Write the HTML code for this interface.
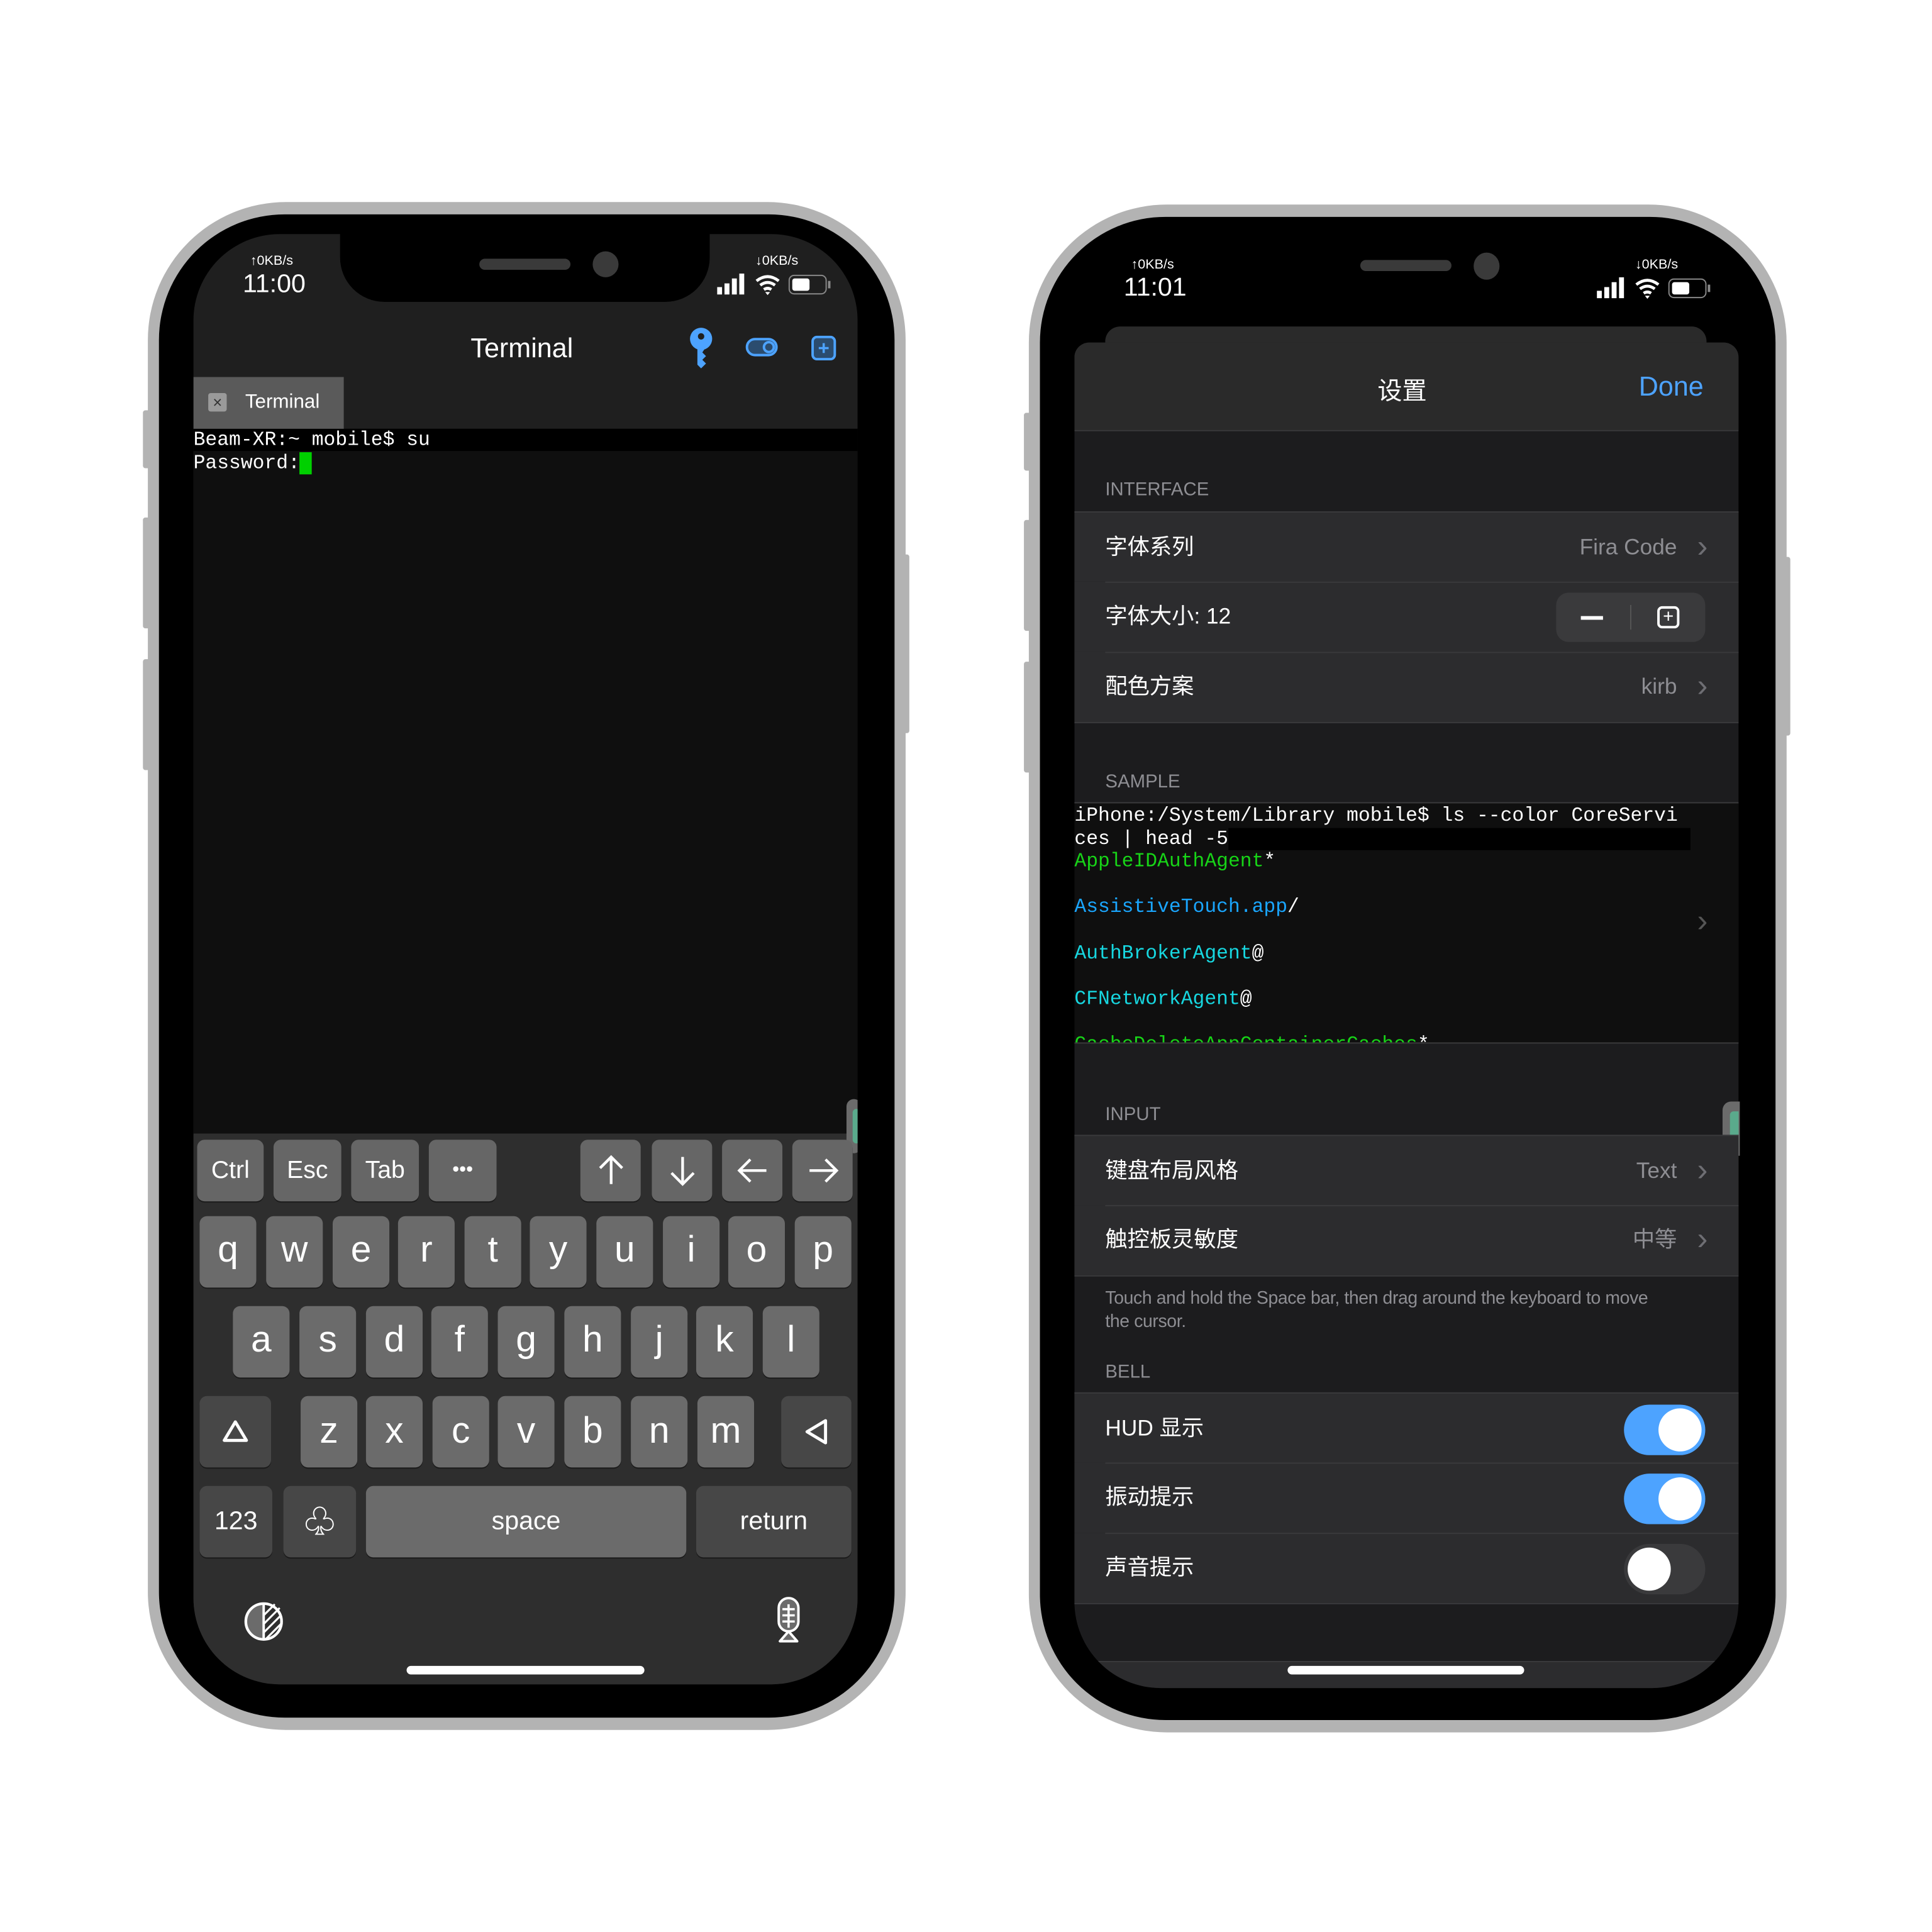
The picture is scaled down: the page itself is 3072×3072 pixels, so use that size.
<!DOCTYPE html>
<html><head><meta charset="utf-8"><style>
*{margin:0;padding:0;box-sizing:border-box}
html,body{width:3072px;height:3072px;background:#fff;overflow:hidden}
#w{position:absolute;left:0;top:0;width:1568px;height:1568px;transform:scale(1.959184);transform-origin:0 0;font-family:"Liberation Sans","Noto Sans CJK SC",sans-serif}
.a{position:absolute}
.bez{background:#b3b3b3;border-radius:112px}
.blk{background:#000;border-radius:102px}
.k{position:absolute;background:#6b6b6b;border-radius:6px;color:#fff;font-size:30px;text-align:center;box-shadow:0 1px 0 #1a1a1a}
.kd{background:#474747}
.k1{height:50px;top:925px;font-size:20px;line-height:50px;background:#666}
.ar svg{margin-top:11px}
.r2{top:987px;height:58px;line-height:56px;width:46px}
.r3{top:1060px;height:58px;line-height:56px;width:46px}
.r4{top:1133px;height:58px;line-height:58px;width:46px}
.r5{top:1206px;height:58px;line-height:58px;font-size:21px}
.mono{font-family:"Liberation Mono",monospace}
.lbl{position:absolute;left:897px;font-size:15px;color:#8e8e93}
.row{position:absolute;left:872px;width:539px;height:57px;background:#2c2c2e}
.row .t{position:absolute;left:25px;top:0;line-height:57px;font-size:18px;color:#fff}
.row .v{position:absolute;right:50px;top:0;line-height:57px;font-size:18px;color:#8e8e93}
.row .c{position:absolute;right:25px;top:0;line-height:54px;font-size:26px;color:#6e6e73}
.sep{position:absolute;left:25px;right:0;top:0;height:1px;background:#3a3a3c}
.tg{position:absolute;right:27px;top:9px;width:66px;height:41px;border-radius:21px;background:#4da3ff}
.tg i{position:absolute;right:3px;top:3px;width:35px;height:35px;border-radius:50%;background:#fff}
.tg.off{background:#3a3a3c}.tg.off i{left:3px;right:auto}
</style></head><body><div id="w">

<!-- LEFT PHONE -->
<div class="a" style="left:116px;top:333px;width:8px;height:47px;background:#b3b3b3;border-radius:2px"></div>
<div class="a" style="left:116px;top:420px;width:8px;height:90px;background:#b3b3b3;border-radius:2px"></div>
<div class="a" style="left:116px;top:535px;width:8px;height:90px;background:#b3b3b3;border-radius:2px"></div>
<div class="a" style="left:730px;top:450px;width:8px;height:145px;background:#b3b3b3;border-radius:2px"></div>
<div class="a bez" style="left:120px;top:164px;width:615px;height:1240px"></div>
<div class="a blk" style="left:129px;top:174px;width:597px;height:1220px"></div>
<div class="a" style="left:157px;top:190px;width:539px;height:1177px;border-radius:70px;overflow:hidden;background:#1f1f1f">
  <div class="a" style="left:0;top:158px;width:539px;height:572px;background:#0f0f0f"></div>
  <div class="a" style="left:0;top:158px;width:539px;height:18px;background:#000"></div>
  <div class="a" style="left:0;top:116px;width:122px;height:42px;background:#5a5a5a"></div>
  <div class="a" style="left:12px;top:129px;width:15px;height:15px;background:#9a9a9a;border-radius:2px;color:#333;font-size:13px;line-height:15px;text-align:center">×</div>
  <div class="a" style="left:42px;top:128px;color:#fff;font-size:16px">Terminal</div>
  <div class="a mono" style="left:0;top:158px;color:#fff;font-size:16px;line-height:19px;white-space:pre">Beam-XR:~ mobile$ su
Password:<span style="background:#00d000">&nbsp;</span></div>
  <div class="a" style="left:0;top:730px;width:539px;height:460px;background:#2e2e2e"></div>
  <div class="a" style="left:530px;top:702px;width:12px;height:44px;background:#6b6b6b;border-radius:6px"></div>
  <div class="a" style="left:535px;top:710px;width:6px;height:28px;background:#5aaa8c;border-radius:3px"></div>
</div>
<div class="a" style="left:276px;top:180px;width:300px;height:65px;background:#000;border-radius:0 0 36px 36px"></div>
<div class="a" style="left:389px;top:210px;width:74px;height:9px;background:#3a3a3a;border-radius:5px"></div>
<div class="a" style="left:481px;top:204px;width:21px;height:21px;background:#3a3a3a;border-radius:50%"></div>
<div class="a" style="left:203px;top:206px;color:#fff;font-size:11px">↑0KB/s</div>
<div class="a" style="left:197px;top:219px;color:#fff;font-size:21px">11:00</div>
<div class="a" style="left:613px;top:206px;color:#fff;font-size:11px">↓0KB/s</div>
<svg class="a" style="left:582px;top:222px" width="95" height="18" viewBox="0 0 95 18">
<rect x="0" y="11" width="4" height="6" fill="#fff"/><rect x="6" y="8" width="4" height="9" fill="#fff"/><rect x="12" y="4" width="4" height="13" fill="#fff"/><rect x="18" y="0" width="4" height="17" fill="#fff"/>
<path d="M32 6 Q41 -1 50 6 M35 9.5 Q41 5 47 9.5 M38 13 Q41 11 44 13" stroke="#fff" stroke-width="2.4" fill="none"/><path d="M39 15 L41 17.5 L43 15Z" fill="#fff"/>
<rect x="58.5" y="1.5" width="30" height="15" rx="4" fill="none" stroke="#888"/><rect x="61" y="4" width="14" height="10" rx="2" fill="#fff"/><rect x="90" y="6" width="2" height="6" fill="#888"/>
</svg>
<div class="a" style="left:382px;top:270px;color:#fff;font-size:22px">Terminal</div>
<svg class="a" style="left:558px;top:265px" width="22" height="34" viewBox="0 0 22 34"><circle cx="11" cy="10" r="9" fill="#4da3ff"/><circle cx="11" cy="8" r="2.6" fill="#1f1f1f"/><path d="M8 16 L8 31 L11 34 L15 30 L12 27 L15 24 L12 21 L14 18 L14 16Z" fill="#4da3ff"/></svg>
<svg class="a" style="left:605px;top:273px" width="28" height="18" viewBox="0 0 28 18"><rect x="1.2" y="2.2" width="24" height="13" rx="6.5" fill="#2b4c6e" stroke="#4da3ff" stroke-width="2"/><circle cx="19" cy="8.7" r="4" fill="none" stroke="#4da3ff" stroke-width="2"/></svg>
<svg class="a" style="left:658px;top:272px" width="22" height="22" viewBox="0 0 22 22"><rect x="1.5" y="1.5" width="18" height="18" rx="3.5" fill="#2b4c6e" stroke="#4da3ff" stroke-width="2"/><path d="M10.5 6.5v8M6.5 10.5h8" stroke="#4da3ff" stroke-width="1.8"/></svg>
<!-- keys -->
<div class="k k1" style="left:160px;width:54px">Ctrl</div>
<div class="k k1" style="left:222px;width:55px">Esc</div>
<div class="k k1" style="left:285px;width:55px">Tab</div>
<div class="k k1" style="left:348px;width:55px;font-size:16px">•••</div>
<div class="k k1 ar" style="left:471px;width:49px"><svg width="28" height="28" viewBox="0 0 28 28"><path d="M14 25V4M5 12l9-9 9 9" stroke="#fff" stroke-width="2.2" fill="none"/></svg></div>
<div class="k k1 ar" style="left:529px;width:49px"><svg width="28" height="28" viewBox="0 0 28 28"><path d="M14 3v21M5 16l9 9 9-9" stroke="#fff" stroke-width="2.2" fill="none"/></svg></div>
<div class="k k1 ar" style="left:586px;width:49px"><svg width="28" height="28" viewBox="0 0 28 28"><path d="M25 14H4M12 5l-9 9 9 9" stroke="#fff" stroke-width="2.2" fill="none"/></svg></div>
<div class="k k1 ar" style="left:643px;width:49px"><svg width="28" height="28" viewBox="0 0 28 28"><path d="M3 14h21M16 5l9 9-9 9" stroke="#fff" stroke-width="2.2" fill="none"/></svg></div>
<div class="k r2" style="left:162px">q</div><div class="k r2" style="left:216px">w</div><div class="k r2" style="left:270px">e</div><div class="k r2" style="left:323px">r</div><div class="k r2" style="left:377px">t</div><div class="k r2" style="left:430px">y</div><div class="k r2" style="left:484px">u</div><div class="k r2" style="left:538px">i</div><div class="k r2" style="left:591px">o</div><div class="k r2" style="left:645px">p</div>
<div class="k r3" style="left:189px">a</div><div class="k r3" style="left:243px">s</div><div class="k r3" style="left:297px">d</div><div class="k r3" style="left:350px">f</div><div class="k r3" style="left:404px">g</div><div class="k r3" style="left:458px">h</div><div class="k r3" style="left:512px">j</div><div class="k r3" style="left:565px">k</div><div class="k r3" style="left:619px">l</div>
<div class="k r4 kd" style="left:162px;width:58px"><svg width="24" height="22" viewBox="0 0 24 22" style="margin-top:18px"><path d="M12 3 L21 18 H3 Z" fill="none" stroke="#fff" stroke-width="2.5" stroke-linejoin="round"/></svg></div>
<div class="k r4" style="left:244px">z</div><div class="k r4" style="left:297px">x</div><div class="k r4" style="left:351px">c</div><div class="k r4" style="left:404px">v</div><div class="k r4" style="left:458px">b</div><div class="k r4" style="left:512px">n</div><div class="k r4" style="left:566px">m</div>
<div class="k r4 kd" style="left:634px;width:57px"><svg width="22" height="24" viewBox="0 0 22 24" style="margin-top:17px"><path d="M3 12 L18 3 V21 Z" fill="none" stroke="#fff" stroke-width="2.5" stroke-linejoin="round"/></svg></div>
<div class="k r5 kd" style="left:162px;width:59px">123</div>
<div class="k r5 kd" style="left:230px;width:59px;font-size:26px">♧</div>
<div class="k r5" style="left:297px;width:260px">space</div>
<div class="k r5 kd" style="left:565px;width:126px">return</div>
<svg class="a" style="left:197px;top:1299px" width="34" height="34" viewBox="0 0 34 34"><defs><clipPath id="rh"><rect x="17" y="0" width="17" height="34"/></clipPath></defs><circle cx="17" cy="17" r="14.5" fill="#6b6b6b" stroke="#fff" stroke-width="2.2"/><g clip-path="url(#rh)"><circle cx="17" cy="17" r="13.4" fill="#2e2e2e"/><path d="M17 12 L26 3 M17 19 L30 6 M17 26 L31 12 M19 31 L32 18" stroke="#fff" stroke-width="1.6"/></g><path d="M17 3 V31" stroke="#fff" stroke-width="2"/></svg>
<svg class="a" style="left:629px;top:1296px" width="22" height="40" viewBox="0 0 22 40"><rect x="3" y="1" width="16" height="27" rx="8" fill="#6b6b6b" stroke="#fff" stroke-width="2"/><path d="M6 10h10M6 15h10M6 20h10M11 6v19" stroke="#fff" stroke-width="1.8"/><path d="M11 28 L4 36 H18 Z" fill="#6b6b6b" stroke="#fff" stroke-width="2" stroke-linejoin="round"/></svg>
<div class="a" style="left:330px;top:1352px;width:193px;height:7px;background:#fff;border-radius:4px"></div>

<!-- RIGHT PHONE -->
<div class="a" style="left:831px;top:335px;width:8px;height:47px;background:#b3b3b3;border-radius:2px"></div>
<div class="a" style="left:831px;top:422px;width:8px;height:90px;background:#b3b3b3;border-radius:2px"></div>
<div class="a" style="left:831px;top:537px;width:8px;height:90px;background:#b3b3b3;border-radius:2px"></div>
<div class="a" style="left:1445px;top:452px;width:8px;height:145px;background:#b3b3b3;border-radius:2px"></div>
<div class="a bez" style="left:835px;top:166px;width:615px;height:1240px"></div>
<div class="a blk" style="left:844px;top:176px;width:597px;height:1220px"></div>
<div class="a" style="left:872px;top:192px;width:539px;height:1178px;border-radius:70px;overflow:hidden;background:#000">
  <div class="a" style="left:25px;top:73px;width:488px;height:40px;background:#2a2a2a;border-radius:12px"></div>
  <div class="a" style="left:0;top:86px;width:539px;height:1100px;background:#1c1c1e;border-radius:12px 12px 0 0"></div>
  <div class="a" style="left:0;top:86px;width:539px;height:72px;background:#2a2a2a;border-radius:12px 12px 0 0;border-bottom:1px solid #3a3a3c"></div>
  <div class="a" style="left:0;top:1156px;width:539px;height:30px;background:#2c2c2e;border-top:1px solid #3a3a3c"></div>
</div>
<div class="a" style="left:1104px;top:211px;width:74px;height:9px;background:#3a3a3a;border-radius:5px"></div>
<div class="a" style="left:1196px;top:205px;width:21px;height:22px;background:#3a3a3a;border-radius:50%"></div>
<div class="a" style="left:918px;top:209px;color:#fff;font-size:11px">↑0KB/s</div>
<div class="a" style="left:912px;top:222px;color:#fff;font-size:21px">11:01</div>
<div class="a" style="left:1327px;top:209px;color:#fff;font-size:11px">↓0KB/s</div>
<svg class="a" style="left:1296px;top:225px" width="95" height="18" viewBox="0 0 95 18">
<rect x="0" y="11" width="4" height="6" fill="#fff"/><rect x="6" y="8" width="4" height="9" fill="#fff"/><rect x="12" y="4" width="4" height="13" fill="#fff"/><rect x="18" y="0" width="4" height="17" fill="#fff"/>
<path d="M32 6 Q41 -1 50 6 M35 9.5 Q41 5 47 9.5 M38 13 Q41 11 44 13" stroke="#fff" stroke-width="2.4" fill="none"/><path d="M39 15 L41 17.5 L43 15Z" fill="#fff"/>
<rect x="58.5" y="1.5" width="30" height="15" rx="4" fill="none" stroke="#888"/><rect x="61" y="4" width="14" height="10" rx="2" fill="#fff"/><rect x="90" y="6" width="2" height="6" fill="#888"/>
</svg>
<div class="a" style="left:1118px;top:301px;color:#fff;font-size:20px">设置</div>
<div class="a" style="left:1330px;top:301px;color:#4da3ff;font-size:22px">Done</div>

<div class="lbl" style="top:389px">INTERFACE</div>
<div class="row" style="top:415px;border-top:1px solid #3a3a3c"><div class="t">字体系列</div><div class="v">Fira Code</div><div class="c">›</div></div>
<div class="row" style="top:472px"><div class="sep"></div><div class="t">字体大小: 12</div>
  <div class="a" style="right:27px;top:9px;width:121px;height:40px;background:#3a3a3c;border-radius:10px">
    <div class="a" style="left:20px;top:19px;width:18px;height:2.5px;background:#fff"></div>
    <div class="a" style="left:60px;top:10px;width:1px;height:20px;background:#555"></div>
    <div class="a" style="left:82px;top:11px;width:18px;height:18px;border:2px solid #fff;border-radius:4px;color:#fff;font-size:15px;line-height:14px;text-align:center">+</div>
  </div></div>
<div class="row" style="top:529px"><div class="sep"></div><div class="t">配色方案</div><div class="v">kirb</div><div class="c">›</div></div>
<div class="a" style="left:872px;top:586px;width:539px;height:1px;background:#3a3a3c"></div>

<div class="lbl" style="top:626px">SAMPLE</div>
<div class="a" style="left:872px;top:651px;width:539px;height:196px;background:#0f0f0f;border-top:1px solid #3a3a3c;overflow:hidden">
  <div class="a" style="left:125px;top:20px;width:375px;height:18px;background:#000"></div>
  <div class="a mono" style="left:0;top:1px;font-size:16px;line-height:18.6px;color:#fff;white-space:pre">iPhone:/System/Library mobile$ ls --color CoreServi
ces | head -5
<span style="color:#17d417">AppleIDAuthAgent</span>*

<span style="color:#1aa6ff">AssistiveTouch.app</span>/

<span style="color:#17d7e0">AuthBrokerAgent</span>@

<span style="color:#17d7e0">CFNetworkAgent</span>@

<span style="color:#17d417">CacheDeleteAppContainerCaches</span>*</div>
  <div class="a" style="right:25px;top:80px;color:#555;font-size:26px">›</div>
</div>
<div class="a" style="left:872px;top:846px;width:539px;height:1px;background:#3a3a3c"></div>

<div class="lbl" style="top:896px">INPUT</div>
<div class="a" style="left:1398px;top:894px;width:14px;height:44px;background:#6b6b6b;border-radius:7px 0 0 7px"></div>
<div class="a" style="left:1404px;top:902px;width:7px;height:28px;background:#5aaa8c;border-radius:3px 0 0 3px"></div>
<div class="row" style="top:921px;border-top:1px solid #3a3a3c"><div class="t">键盘布局风格</div><div class="v">Text</div><div class="c">›</div></div>
<div class="row" style="top:978px"><div class="sep"></div><div class="t">触控板灵敏度</div><div class="v">中等</div><div class="c">›</div></div>
<div class="a" style="left:872px;top:1035px;width:539px;height:1px;background:#3a3a3c"></div>
<div class="a" style="left:897px;top:1045px;width:462px;color:#8e8e93;font-size:14.5px;line-height:19px;letter-spacing:-0.2px">Touch and hold the Space bar, then drag around the keyboard to move the cursor.</div>

<div class="lbl" style="top:1105px">BELL</div>
<div class="row" style="top:1130px;border-top:1px solid #3a3a3c"><div class="t">HUD 显示</div><div class="tg"><i></i></div></div>
<div class="row" style="top:1187px"><div class="sep"></div><div class="t">振动提示</div><div class="tg"><i></i></div></div>
<div class="row" style="top:1244px"><div class="sep"></div><div class="t">声音提示</div><div class="tg off"><i></i></div></div>
<div class="a" style="left:872px;top:1301px;width:539px;height:1px;background:#3a3a3c"></div>
<div class="a" style="left:1045px;top:1352px;width:192px;height:7px;background:#fff;border-radius:4px"></div>

</div></body></html>
